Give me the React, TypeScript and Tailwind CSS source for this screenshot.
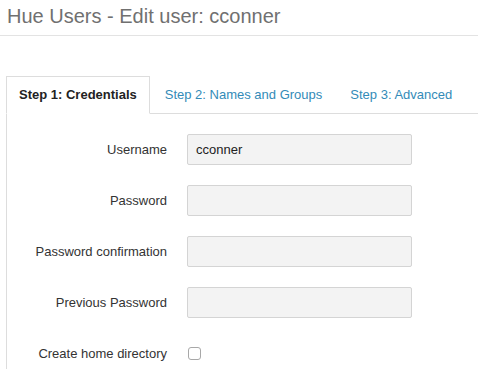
import React from "react";

const font = { fontFamily: '"Liberation Sans", Arial, Helvetica, sans-serif' };

function Row({ label, value, last }: { label: string; value?: string; last?: boolean }) {
  return (
    <div className="flex items-center h-[31px]">
      <div className="w-[160px] text-right text-[13px] text-[#333] pr-0">{label}</div>
      <div className="ml-[20px] w-[225px] h-[31px] bg-[#f3f3f3] border border-[#d4d4d4] rounded-[2px] flex items-center px-[8px] text-[13px] text-[#222]">
        {value}
      </div>
    </div>
  );
}

export default function App() {
  return (
    <div className="w-[478px] h-[380px] bg-white overflow-hidden" style={font}>
      <div className="h-[36px] border-b border-[#e3e3e3] pl-[7px] flex items-center">
        <h1 className="text-[20px] text-[#707070] leading-[24px] pb-[3px]">Hue Users - Edit user: cconner</h1>
      </div>
      <div className="mt-[40px] pl-[6px]">
        <ul className="flex border-b border-[#dddddd] h-[38px]">
          <li className="mr-[2px] -mb-px border border-[#dddddd] border-b-white bg-white px-[12px] py-[9px] text-[13px] leading-[18px] font-bold text-[#222]">
            Step 1: Credentials
          </li>
          <li className="mr-[2px] border border-transparent px-[12px] py-[9px] text-[13px] leading-[18px] text-[#338bb8]">
            Step 2: Names and Groups
          </li>
          <li className="mr-[2px] border border-transparent px-[12px] py-[9px] text-[13px] leading-[18px] text-[#338bb8]">
            Step 3: Advanced
          </li>
        </ul>
        <div className="border-l border-[#dddddd] pt-[20px] flex flex-col gap-[20px]">
          <Row label="Username" value="cconner" />
          <Row label="Password" />
          <Row label="Password confirmation" />
          <Row label="Previous Password" />
          <div className="flex items-center h-[31px]">
            <div className="w-[160px] text-right text-[13px] text-[#333]">Create home directory</div>
            <span className="ml-[21px] w-[13px] h-[13px] border border-[#a8a8a8] rounded-[3px] bg-white" />
          </div>
        </div>
      </div>
    </div>
  );
}
